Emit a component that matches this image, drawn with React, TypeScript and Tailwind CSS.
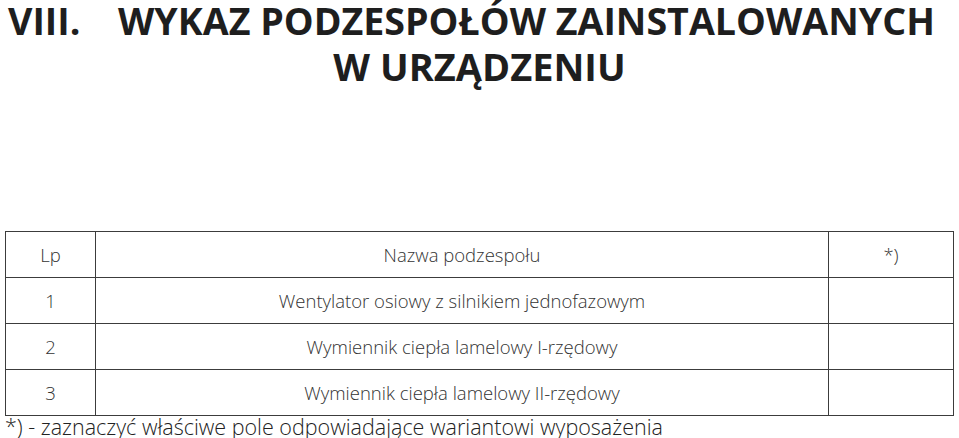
import React from "react";

const rows = [
  { lp: "1", name: "Wentylator osiowy z silnikiem jednofazowym" },
  { lp: "2", name: "Wymiennik ciepła lamelowy I-rzędowy" },
  { lp: "3", name: "Wymiennik ciepła lamelowy II-rzędowy" },
];

export default function App() {
  return (
    <div className="w-[959px] h-[438px] bg-white overflow-hidden font-['Open_Sans',sans-serif] text-[#1e1e1e]">
      <div className="font-bold whitespace-nowrap">
        <div className="flex pl-[8px] text-[37.6px] leading-[41px]">
          <span className="w-[110px]">VIII.</span>
          <span>WYKAZ PODZESPOŁÓW ZAINSTALOWANYCH</span>
        </div>
        <div className="text-center text-[38px] leading-[50px]">W URZĄDZENIU</div>
      </div>

      <table className="ml-[5px] mt-[140px] w-[948px] table-fixed border-collapse text-[18.5px] font-light text-[#333]">
        <colgroup>
          <col className="w-[90px]" />
          <col className="w-[733px]" />
          <col className="w-[125px]" />
        </colgroup>
        <tbody>
          <tr className="h-[46px]">
            <td className="border-[1.5px] border-[#3c3c3c] text-center p-0">Lp</td>
            <td className="border-[1.5px] border-[#3c3c3c] text-center p-0">Nazwa podzespołu</td>
            <td className="border-[1.5px] border-[#3c3c3c] text-center p-0">*)</td>
          </tr>
          {rows.map((r) => (
            <tr key={r.lp} className="h-[46px]">
              <td className="border-[1.5px] border-[#3c3c3c] text-center p-0">{r.lp}</td>
              <td className="border-[1.5px] border-[#3c3c3c] text-center p-0">{r.name}</td>
              <td className="border-[1.5px] border-[#3c3c3c] p-0"></td>
            </tr>
          ))}
        </tbody>
      </table>

      <p className="pl-[5px] text-[21.5px] leading-[21px] font-light text-[#222] whitespace-nowrap">
        *) - zaznaczyć właściwe pole odpowiadające wariantowi wyposażenia
      </p>
    </div>
  );
}
